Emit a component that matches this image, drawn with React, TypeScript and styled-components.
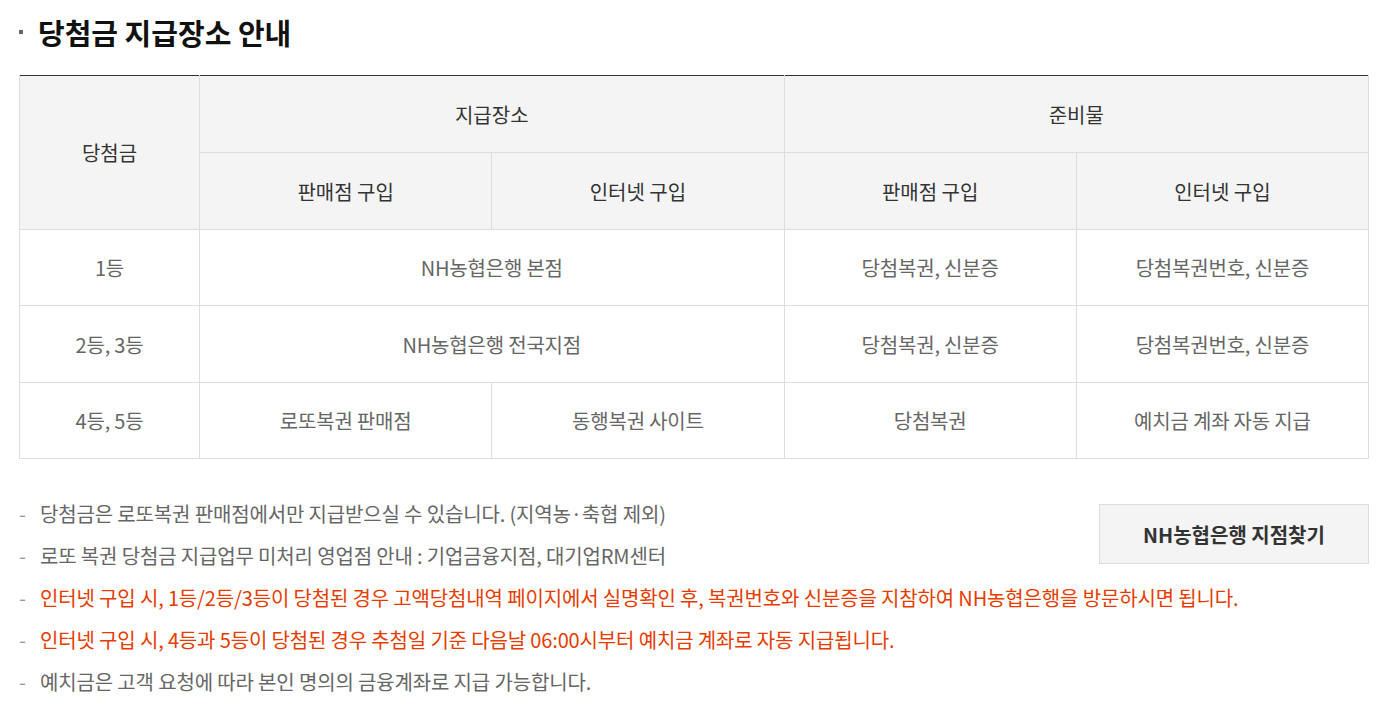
import * as React from "react";
import styled, { createGlobalStyle } from "styled-components";

const GlobalStyle = createGlobalStyle`
  html, body {
    margin: 0;
    padding: 0;
    background: #fff;
  }
  body {
    font-family: "Noto Sans CJK KR", "Noto Sans", sans-serif;
    color: #333;
  }
`;

const Wrap = styled.div`
  width: 1350px;
  margin-left: 19px;
`;

const Title = styled.h3`
  position: relative;
  margin: 0;
  padding: 11px 0 0 19px;
  height: 75px;
  box-sizing: border-box;
  font-size: 29px;
  font-weight: 700;
  line-height: 42px;
  color: #111;

  &::before {
    content: "";
    position: absolute;
    left: 0;
    top: 30px;
    width: 4px;
    height: 4px;
    background: #666;
  }
`;

const Table = styled.table`
  width: 100%;
  border-collapse: collapse;
  table-layout: fixed;
  border-top: 1px solid #333;
`;

const Th = styled.th`
  height: 76px;
  padding: 0;
  background: #f4f4f4;
  border: 1px solid #ddd;
  border-top: none;
  font-size: 20px;
  font-weight: 400;
  color: #333;
  text-align: center;
  vertical-align: middle;
`;

const Td = styled.td`
  height: 75.4px;
  padding: 0;
  border: 1px solid #ddd;
  font-size: 20px;
  color: #666;
  letter-spacing: -0.2px;
  text-align: center;
  vertical-align: middle;
`;

const Bottom = styled.div`
  margin-top: 34px;
`;

const Notes = styled.ul`
  margin: 0;
  padding: 0;
  list-style: none;
`;

const Note = styled.li<{ $red?: boolean }>`
  position: relative;
  padding-left: 21px;
  font-size: 20px;
  line-height: 42px;
  letter-spacing: -0.15px;
  color: ${p => (p.$red ? "#e63c00" : "#666")};

  &::before {
    content: "-";
    position: absolute;
    left: 0;
    top: 0;
    color: #999;
  }
`;

const FindButton = styled.button`
  float: right;
  width: 270px;
  height: 60px;
  margin-top: 11px;
  background: #f4f4f4;
  border: 1px solid #ddd;
  font-family: inherit;
  font-size: 20px;
  font-weight: 700;
  color: #333;
  cursor: pointer;
`;

const rows = [
  { rank: "1등", place: "NH농협은행 본점", store: "당첨복권, 신분증", net: "당첨복권번호, 신분증" },
  { rank: "2등, 3등", place: "NH농협은행 전국지점", store: "당첨복권, 신분증", net: "당첨복권번호, 신분증" },
];

const notes = [
  { text: "당첨금은 로또복권 판매점에서만 지급받으실 수 있습니다. (지역농·축협 제외)" },
  { text: "로또 복권 당첨금 지급업무 미처리 영업점 안내 : 기업금융지점, 대기업RM센터" },
  {
    text: "인터넷 구입 시, 1등/2등/3등이 당첨된 경우 고액당첨내역 페이지에서 실명확인 후, 복권번호와 신분증을 지참하여 NH농협은행을 방문하시면 됩니다.",
    red: true,
  },
  { text: "인터넷 구입 시, 4등과 5등이 당첨된 경우 추첨일 기준 다음날 06:00시부터 예치금 계좌로 자동 지급됩니다.", red: true },
  { text: "예치금은 고객 요청에 따라 본인 명의의 금융계좌로 지급 가능합니다." },
];

export default function App() {
  return (
    <Wrap>
      <GlobalStyle />
      <Title>당첨금 지급장소 안내</Title>
      <Table>
        <colgroup>
          <col style={{ width: 180 }} />
          <col />
          <col />
          <col />
          <col />
        </colgroup>
        <thead>
          <tr>
            <Th rowSpan={2}>당첨금</Th>
            <Th colSpan={2}>지급장소</Th>
            <Th colSpan={2}>준비물</Th>
          </tr>
          <tr>
            <Th>판매점 구입</Th>
            <Th>인터넷 구입</Th>
            <Th>판매점 구입</Th>
            <Th>인터넷 구입</Th>
          </tr>
        </thead>
        <tbody>
          {rows.map(row => (
            <tr key={row.rank}>
              <Td>{row.rank}</Td>
              <Td colSpan={2}>{row.place}</Td>
              <Td>{row.store}</Td>
              <Td>{row.net}</Td>
            </tr>
          ))}
          <tr>
            <Td>4등, 5등</Td>
            <Td>로또복권 판매점</Td>
            <Td>동행복권 사이트</Td>
            <Td>당첨복권</Td>
            <Td>예치금 계좌 자동 지급</Td>
          </tr>
        </tbody>
      </Table>
      <Bottom>
        <FindButton>NH농협은행 지점찾기</FindButton>
        <Notes>
          {notes.map(note => (
            <Note key={note.text} $red={note.red}>
              {note.text}
            </Note>
          ))}
        </Notes>
      </Bottom>
    </Wrap>
  );
}
